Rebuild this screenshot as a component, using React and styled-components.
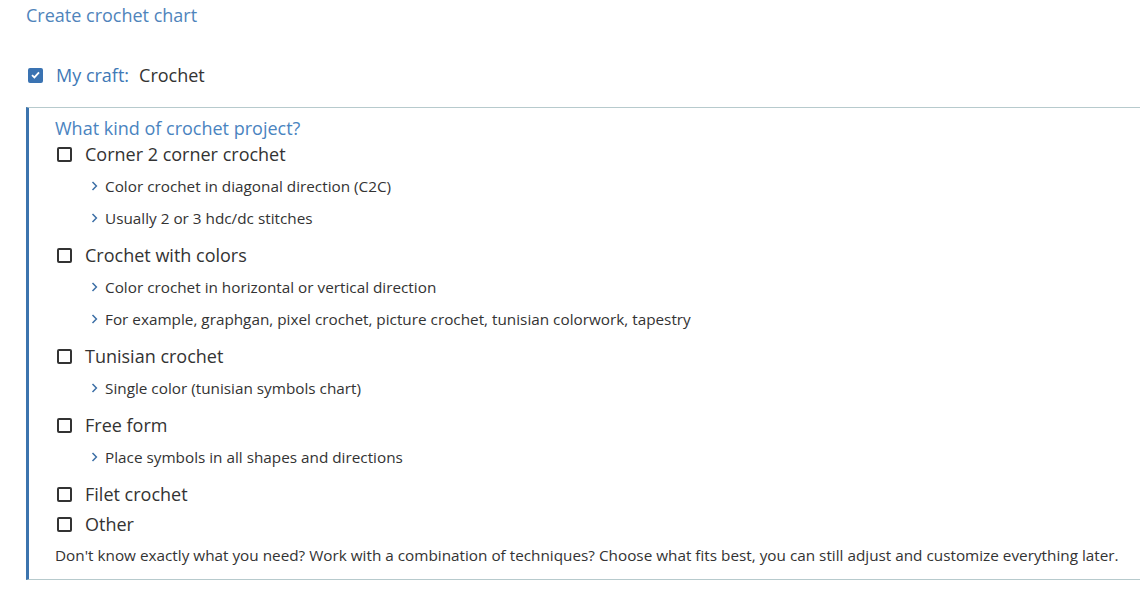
import styled, { createGlobalStyle } from 'styled-components';

const GlobalStyle = createGlobalStyle`
  body {
    margin: 0;
    background: #fff;
    font-family: "Open Sans", "Liberation Sans", sans-serif;
    color: #333;
  }
`;

const PROJECT_TYPES = [
  {
    label: 'Corner 2 corner crochet',
    notes: ['Color crochet in diagonal direction (C2C)', 'Usually 2 or 3 hdc/dc stitches'],
  },
  {
    label: 'Crochet with colors',
    notes: [
      'Color crochet in horizontal or vertical direction',
      'For example, graphgan, pixel crochet, picture crochet, tunisian colorwork, tapestry',
    ],
  },
  { label: 'Tunisian crochet', notes: ['Single color (tunisian symbols chart)'] },
  { label: 'Free form', notes: ['Place symbols in all shapes and directions'] },
  { label: 'Filet crochet', notes: [] },
  { label: 'Other', notes: [] },
];

const Page = styled.div`
  padding: 3px 0 20px 26px;
`;

const Title = styled.div`
  font-size: 18px;
  line-height: 24px;
  color: #4f84bb;
`;

const CraftRow = styled.div`
  display: flex;
  align-items: center;
  height: 24px;
  margin: 36px 0 20px 2px;
  font-size: 18px;
`;

const CraftLabel = styled.span`
  color: #3f79b6;
  margin-left: 13px;
  margin-right: 10px;
`;

const Box = styled.span`
  display: inline-flex;
  align-items: center;
  justify-content: center;
  box-sizing: border-box;
  width: 15px;
  height: 15px;
  flex-shrink: 0;
  border-radius: 2px;
  border: 2px solid ${({ checked }) => (checked ? '#3a73b2' : '#333')};
  background: ${({ checked }) => (checked ? '#3a73b2' : '#fff')};
`;

const Section = styled.div`
  border-top: 1px solid #b7cacd;
  border-bottom: 1px solid #b7cacd;
  border-left: 3px solid #3c74ae;
  padding: 7px 0 10px 26px;
`;

const Question = styled.div`
  font-size: 18px;
  line-height: 26px;
  color: #4a84bf;
`;

const Option = styled.div`
  padding-bottom: 4px;
`;

const OptionRow = styled.label`
  display: flex;
  align-items: center;
  gap: 13px;
  padding-left: 2px;
  font-size: 18px;
  line-height: 26px;
  color: #333;
`;

const NoteList = styled.ul`
  list-style: none;
  margin: 0;
  padding: 3px 0 4px 36px;
`;

const Note = styled.li`
  display: flex;
  align-items: center;
  gap: 7px;
  font-size: 15.3px;
  line-height: 32px;
  color: #333;
`;

const Hint = styled.div`
  font-size: 15.3px;
  line-height: 28px;
  color: #333;
  white-space: nowrap;
`;

const Check = ({ checked }) => (
  <Box checked={checked}>
    {checked && (
      <svg width="9" height="8" viewBox="0 0 9 8">
        <path d="M1 4.2 L3.4 6.4 L8 1.4" fill="none" stroke="#fff" strokeWidth="1.8" />
      </svg>
    )}
  </Box>
);

const Chevron = () => (
  <svg width="7" height="10" viewBox="0 0 7 10">
    <path d="M1.5 1 L5.4 5 L1.5 9" fill="none" stroke="#3c6fa6" strokeWidth="1.5" />
  </svg>
);

export default function App() {
  return (
    <Page>
      <GlobalStyle />
      <Title>Create crochet chart</Title>
      <CraftRow>
        <Check checked />
        <CraftLabel>My craft:</CraftLabel>
        <span>Crochet</span>
      </CraftRow>
      <Section>
        <Question>What kind of crochet project?</Question>
        {PROJECT_TYPES.map(({ label, notes }) => (
          <Option key={label}>
            <OptionRow>
              <Check />
              {label}
            </OptionRow>
            {notes.length > 0 && (
              <NoteList>
                {notes.map((note) => (
                  <Note key={note}>
                    <Chevron />
                    {note}
                  </Note>
                ))}
              </NoteList>
            )}
          </Option>
        ))}
        <Hint>
          Don't know exactly what you need? Work with a combination of techniques? Choose what fits
          best, you can still adjust and customize everything later.
        </Hint>
      </Section>
    </Page>
  );
}
